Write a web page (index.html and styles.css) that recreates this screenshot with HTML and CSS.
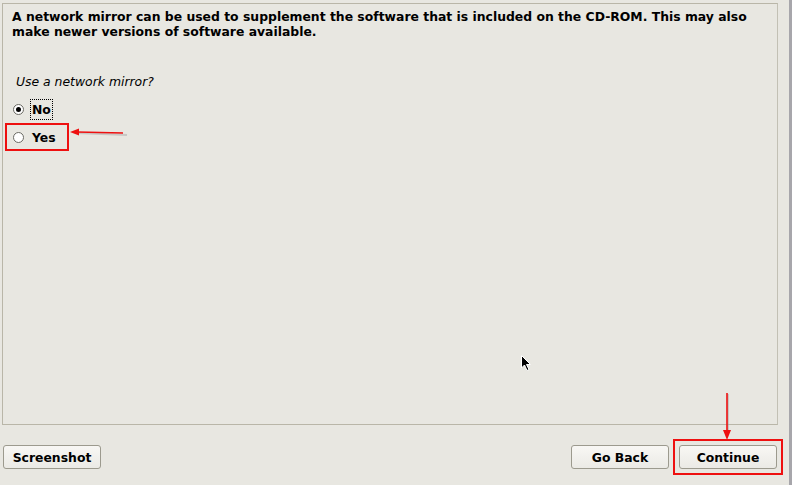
FILE: index.html
```html
<!DOCTYPE html>
<html lang="en">

<head>
    <meta charset="UTF-8">
    <title>Choose a mirror</title>
    <link rel="stylesheet" href="styles.css">
</head>

<body>
    <div class="ventana">
        <main class="panel">
            <p class="descripcion">A network mirror can be used to supplement the software that is included on the CD-ROM. This may also make newer versions of software available.</p>

            <p class="pregunta">Use a network mirror?</p>

            <div class="opciones">
                <label class="opcion">
                    <span class="radio marcado"></span>
                    <span class="etiqueta foco">No</span>
                </label>
                <label class="opcion resaltado">
                    <span class="radio"></span>
                    <span class="etiqueta">Yes</span>
                </label>
                <svg class="flecha flecha-yes" width="60" height="12" viewBox="0 0 60 12">
                    <line x1="58" y1="7" x2="8" y2="5" stroke="#999" stroke-width="2" opacity="0.4"/>
                    <line x1="54" y1="5" x2="8" y2="4" stroke="#ee1010" stroke-width="1.6"/>
                    <polygon points="1,4 10,0.5 10,7.5" fill="#ee1010"/>
                </svg>
            </div>

            <svg class="cursor" width="12" height="18" viewBox="0 0 12 18">
                <polygon points="0.5,0.5 0.5,13 3.5,10 6,15.5 8,14.5 5.5,9.5 9.5,9.5" fill="#000" stroke="#fff" stroke-width="1"/>
            </svg>
        </main>

        <footer class="botonera">
            <button class="boton">Screenshot</button>
            <div class="derecha">
                <button class="boton">Go Back</button>
                <div class="marca">
                    <button class="boton">Continue</button>
                    <svg class="flecha flecha-continue" width="12" height="50" viewBox="0 0 12 50">
                        <line x1="7" y1="2" x2="7" y2="42" stroke="#999" stroke-width="2" opacity="0.4"/>
                        <line x1="6" y1="1" x2="6" y2="40" stroke="#ee1010" stroke-width="1.6"/>
                        <polygon points="6,48 2,38 10,38" fill="#ee1010"/>
                    </svg>
                </div>
            </div>
        </footer>
    </div>
    <div class="borde-derecho"></div>
</body>

</html>
```

FILE: styles.css
```css
html {
    box-sizing: border-box;
}

*,
*::before,
*::after {
    box-sizing: inherit;
}

body {
    margin: 0;
    padding: 0;
    width: 792px;
    height: 485px;
    overflow: hidden;
    background-color: #e8e7e1;
    font-family: "DejaVu Sans", sans-serif;
    font-size: 12.4px;
    color: #000;
    display: flex;
}

.ventana {
    flex: 1;
    display: flex;
    flex-direction: column;
    padding: 3px 11px 0 2px;
}

.borde-derecho {
    width: 3px;
    background-color: #a7a6ab;
}

.panel {
    position: relative;
    height: 422px;
    border: 1px solid #b9b6a8;
    border-right-color: #c2c0b4;
    padding: 5px 9px;
}

.descripcion {
    margin: 0;
    font-weight: bold;
    line-height: 15px;
}

.pregunta {
    margin: 35px 0 0 4px;
    font-style: italic;
    line-height: 15px;
}

.opciones {
    position: relative;
    display: flex;
    flex-direction: column;
    gap: 4px;
    margin-top: 8px;
}

.opcion {
    display: flex;
    align-items: center;
    gap: 6px;
    width: 60px;
    height: 24px;
    padding-left: 1px;
    font-weight: bold;
}

.radio {
    width: 11px;
    height: 11px;
    border: 1px solid #6b6a64;
    border-radius: 50%;
    background-color: #fff;
    position: relative;
    flex: none;
}

.radio.marcado::after {
    content: '';
    position: absolute;
    left: 2px;
    top: 2px;
    width: 5px;
    height: 5px;
    border-radius: 50%;
    background-color: #000;
}

.etiqueta {
    padding: 2px 1px;
    border: 1px solid transparent;
}

.etiqueta.foco {
    border: 1px dotted #000;
}

.opcion.resaltado {
    outline: 2px solid #ee1010;
    margin-left: -5px;
    padding-left: 6px;
    width: 60px;
}

.flecha {
    position: absolute;
}

.flecha-yes {
    left: 57px;
    top: 31px;
}

.cursor {
    position: absolute;
    left: 518px;
    top: 351px;
}

.botonera {
    display: flex;
    justify-content: space-between;
    align-items: center;
    padding: 20px 0 0 1px;
}

.derecha {
    display: flex;
    gap: 10px;
    margin-right: 1px;
}

.boton {
    width: 98px;
    height: 24px;
    font-family: "DejaVu Sans", sans-serif;
    font-size: 12.4px;
    font-weight: bold;
    color: #000;
    background: linear-gradient(#f8f7f4, #ebeae5);
    border: 1px solid #9c9a8e;
    border-radius: 3px;
}

.marca {
    position: relative;
    outline: 2px solid #ee1010;
    outline-offset: 4px;
}

.flecha-continue {
    left: 42px;
    top: -53px;
}
```
